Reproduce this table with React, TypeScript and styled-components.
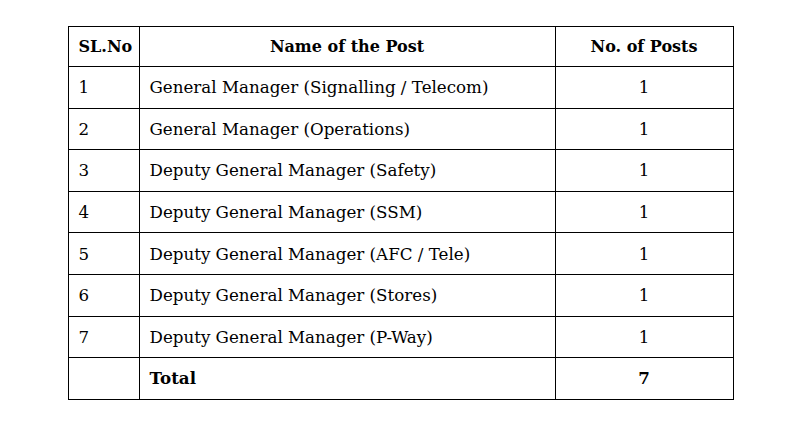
import React from 'react';
import styled, { createGlobalStyle } from 'styled-components';

const GlobalStyle = createGlobalStyle`
  html, body {
    margin: 0;
    padding: 0;
    background: #ffffff;
  }
  body {
    font-family: "DejaVu Serif", serif;
    color: #000000;
  }
`;

const Page = styled.div`
  width: 801px;
  height: 423px;
  display: flex;
  justify-content: center;
  align-items: flex-start;
  padding-top: 26px;
  box-sizing: border-box;
`;

const Table = styled.table`
  border-collapse: collapse;
  width: 665px;
  table-layout: fixed;
  font-size: 16.7px;
  line-height: 20px;
`;

const HeadRow = styled.tr`
  height: 40px;
`;

const Row = styled.tr`
  height: 41.6px;
`;

const HeadCell = styled.th`
  border: 1px solid #000;
  font-size: 16px;
  font-weight: 700;
  text-align: center;
  padding: 0 10px;
`;

const Cell = styled.td<{ center?: boolean; bold?: boolean }>`
  border: 1px solid #000;
  padding: 0 9px 0 ${({ center }) => (center ? 9 : 10)}px;
  text-align: ${({ center }) => (center ? 'center' : 'left')};
  font-weight: ${({ bold }) => (bold ? 700 : 400)};
`;

const posts = [
  'General Manager (Signalling / Telecom)',
  'General Manager (Operations)',
  'Deputy General Manager (Safety)',
  'Deputy General Manager (SSM)',
  'Deputy General Manager (AFC / Tele)',
  'Deputy General Manager (Stores)',
  'Deputy General Manager (P-Way)',
];

export default function App() {
  return (
    <>
      <GlobalStyle />
      <Page>
        <Table>
          <colgroup>
            <col style={{ width: 71 }} />
            <col style={{ width: 416 }} />
            <col style={{ width: 178 }} />
          </colgroup>
          <thead>
            <HeadRow>
              <HeadCell>SL.No</HeadCell>
              <HeadCell>Name of the Post</HeadCell>
              <HeadCell>No. of Posts</HeadCell>
            </HeadRow>
          </thead>
          <tbody>
            {posts.map((name, i) => (
              <Row key={name}>
                <Cell>{i + 1}</Cell>
                <Cell>{name}</Cell>
                <Cell center>1</Cell>
              </Row>
            ))}
            <Row>
              <Cell />
              <Cell bold>Total</Cell>
              <Cell center bold>7</Cell>
            </Row>
          </tbody>
        </Table>
      </Page>
    </>
  );
}
